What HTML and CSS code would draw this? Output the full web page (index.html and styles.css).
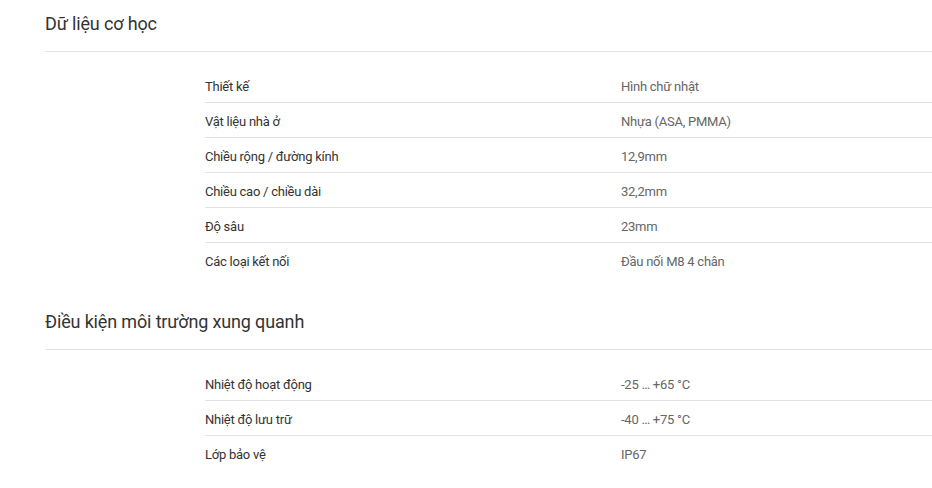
FILE: index.html
```html
<!DOCTYPE html>
<html lang="vi">
<head>
<meta charset="utf-8">
<title>Thông số kỹ thuật</title>
<link rel="stylesheet" href="styles.css">
</head>
<body>
<main class="specs">
  <section class="spec-section">
    <h2 class="spec-title">Dữ liệu cơ học</h2>
    <div class="spec-table">
      <div class="spec-row"><span class="spec-label">Thiết kế</span><span class="spec-value">Hình chữ nhật</span></div>
      <div class="spec-row"><span class="spec-label">Vật liệu nhà ở</span><span class="spec-value">Nhựa (ASA, PMMA)</span></div>
      <div class="spec-row"><span class="spec-label">Chiều rộng / đường kính</span><span class="spec-value">12,9mm</span></div>
      <div class="spec-row"><span class="spec-label">Chiều cao / chiều dài</span><span class="spec-value">32,2mm</span></div>
      <div class="spec-row"><span class="spec-label">Độ sâu</span><span class="spec-value">23mm</span></div>
      <div class="spec-row"><span class="spec-label">Các loại kết nối</span><span class="spec-value">Đầu nối M8 4 chân</span></div>
    </div>
  </section>
  <section class="spec-section">
    <h2 class="spec-title">Điều kiện môi trường xung quanh</h2>
    <div class="spec-table">
      <div class="spec-row"><span class="spec-label">Nhiệt độ hoạt động</span><span class="spec-value">-25 … +65 °C</span></div>
      <div class="spec-row"><span class="spec-label">Nhiệt độ lưu trữ</span><span class="spec-value">-40 … +75 °C</span></div>
      <div class="spec-row"><span class="spec-label">Lớp bảo vệ</span><span class="spec-value">IP67</span></div>
    </div>
  </section>
</main>
</body>
</html>
```

FILE: styles.css
```css
html, body {
  margin: 0;
  padding: 0;
  background: #ffffff;
}

body {
  font-family: Roboto, "Noto Sans", Arial, sans-serif;
  color: #333333;
}

.specs {
  padding: 12px 0 0 45px;
}

.spec-section + .spec-section {
  margin-top: 33px;
}

.spec-title {
  margin: 0;
  font-size: 18px;
  font-weight: 400;
  line-height: 24px;
  color: #333333;
  letter-spacing: -0.15px;
  padding-bottom: 15px;
  border-bottom: 1px solid #e2e2e2;
}

.spec-table {
  margin: 16px 0 0 160px;
}

.spec-row {
  display: grid;
  grid-template-columns: 416px 1fr;
  box-sizing: border-box;
  height: 34px;
  padding-top: 3px;
  align-items: center;
  font-size: 13px;
  line-height: 20px;
  letter-spacing: -0.25px;
}

.spec-row + .spec-row {
  height: 35px;
  border-top: 1px solid #e2e2e2;
}

.spec-label {
  color: #333333;
}

.spec-value {
  color: #666666;
}
```
